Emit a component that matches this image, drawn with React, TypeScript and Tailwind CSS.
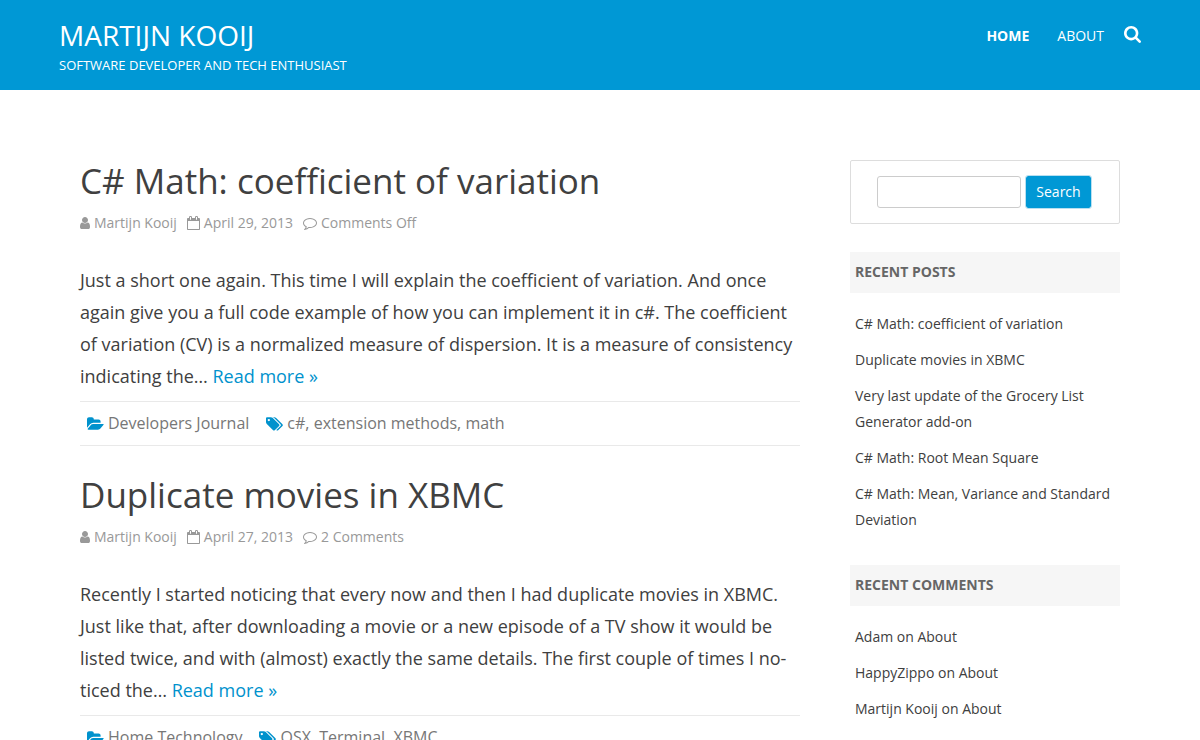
import type { ReactNode } from "react";

type IconProps = { className?: string };

const SearchIcon = ({ className }: IconProps) => (
  <svg viewBox="64 128 1664 1664" fill="currentColor" aria-hidden="true" className={className}>
    <path d="M1216 832q0-185-131.500-316.500t-316.500-131.500-316.500 131.500-131.500 316.500 131.500 316.500 316.500 131.500 316.500-131.500 131.500-316.500zm512 832q0 52-38 90t-90 38q-54 0-90-38l-343-342q-179 124-399 124-143 0-273.500-55.500t-225-150-150-225-55.500-273.500 55.500-273.500 150-225 225-150 273.500-55.500 273.500 55.500 225 150 150 225 55.500 273.500q0 220-124 399l343 343q37 37 37 90z" />
  </svg>
);

const UserIcon = ({ className }: IconProps) => (
  <svg viewBox="256 0 1280 1792" fill="currentColor" aria-hidden="true" className={className}>
    <path d="M1536 1399q0 109-62.500 187t-150.500 78h-854q-88 0-150.500-78t-62.500-187q0-85 8.500-160.500t31.500-152 58.500-131 94-89 134.500-34.500q131 128 313 128t313-128q76 0 134.500 34.500t94 89 58.500 131 31.500 152 8.500 160.500zm-256-887q0 159-112.500 271.500t-271.500 112.500-271.500-112.500-112.500-271.500 112.500-271.500 271.500-112.500 271.500 112.500 112.500 271.500z" />
  </svg>
);

const CalendarIcon = ({ className }: IconProps) => (
  <svg viewBox="64 0 1664 1792" fill="currentColor" aria-hidden="true" className={className}>
    <path d="M192 1664h1408v-1024h-1408v1024zm384-1216v-288q0-14-9-23t-23-9h-64q-14 0-23 9t-9 23v288q0 14 9 23t23 9h64q14 0 23-9t9-23zm768 0v-288q0-14-9-23t-23-9h-64q-14 0-23 9t-9 23v288q0 14 9 23t23 9h64q14 0 23-9t9-23zm384-64v1280q0 52-38 90t-90 38h-1408q-52 0-90-38t-38-90v-1280q0-52 38-90t90-38h128v-96q0-66 47-113t113-47h64q66 0 113 47t47 113v96h384v-96q0-66 47-113t113-47h64q66 0 113 47t47 113v96h128q52 0 90 38t38 90z" />
  </svg>
);

const CommentIcon = ({ className }: IconProps) => (
  <svg viewBox="0 0 1792 1792" fill="currentColor" aria-hidden="true" className={className}>
    <path d="M896 384q-204 0-381.500 69.500t-282 187.500-104.500 255q0 112 71.500 213.500t201.500 175.500l87 50-27 96q-24 91-70 172 152-63 275-171l43-38 57 6q69 8 130 8 204 0 381.500-69.500t282-187.500 104.500-255-104.500-255-282-187.500-381.500-69.500zm896 512q0 174-120 321.500t-326 233-450 85.500q-70 0-145-8-198 175-460 242-49 14-114 22h-5q-15 0-27-10.500t-16-27.500v-1q-3-4-.5-12t2-10 4.500-9.500l6-9 7-8.500 8-9q7-8 31-34.500t34.500-38 31-39.500 32.500-51 27-59 26-76q-157-89-247.500-220t-90.500-281q0-174 120-321.500t326-233 450-85.500 450 85.500 326 233 120 321.500z" />
  </svg>
);

const FolderIcon = ({ className }: IconProps) => (
  <svg viewBox="0 0 1920 1792" fill="currentColor" aria-hidden="true" className={className}>
    <path d="M1879 952q0 31-31 66l-336 396q-43 51-120.500 86.500t-143.500 35.500h-1088q-34 0-60.500-13t-26.500-43q0-31 31-66l336-396q43-51 120.500-86.500t143.500-35.500h1088q34 0 60.500 13t26.500 43zm-343-344v160h-832q-94 0-197 47.500t-164 119.500l-337 396-5 6q0-4-.5-12.500t-.5-12.500v-960q0-92 66-158t158-66h320q92 0 158 66t66 158v32h544q92 0 158 66t66 158z" />
  </svg>
);

const TagsIcon = ({ className }: IconProps) => (
  <svg viewBox="128 0 1920 1792" fill="currentColor" aria-hidden="true" className={className}>
    <path d="M576 448q0-53-37.500-90.500t-90.500-37.500-90.500 37.500-37.500 90.500 37.500 90.500 90.500 37.500 90.500-37.500 37.500-90.500zm1067 576q0 53-37 90l-491 492q-39 37-91 37-53 0-90-37l-715-716q-38-37-64.500-101t-26.500-117v-416q0-52 38-90t90-38h416q53 0 117 26.500t102 64.500l715 714q37 39 37 91zm384 0q0 53-37 90l-491 492q-39 37-91 37-36 0-59-14t-53-45l470-470q37-37 37-90 0-52-37-91l-715-714q-38-38-102-64.500t-117-26.500h224q53 0 117 26.500t102 64.500l715 714q37 39 37 91z" />
  </svg>
);

const posts = [
  {
    title: "C# Math: coefficient of variation",
    author: "Martijn Kooij",
    date: "April 29, 2013",
    comments: "Comments Off",
    excerpt:
      "Just a short one again. This time I will explain the coefficient of variation. And once again give you a full code example of how you can implement it in c#. The coefficient of variation (CV) is a normalized measure of dispersion. It is a measure of consistency indicating the…",
    category: "Developers Journal",
    tags: ["c#", "extension methods", "math"],
  },
  {
    title: "Duplicate movies in XBMC",
    author: "Martijn Kooij",
    date: "April 27, 2013",
    comments: "2 Comments",
    excerpt:
      "Recently I started noticing that every now and then I had duplicate movies in XBMC. Just like that, after downloading a movie or a new episode of a TV show it would be listed twice, and with (almost) exactly the same details. The first couple of times I no\u00adticed the…",
    category: "Home Technology",
    tags: ["OSX", "Terminal", "XBMC"],
  },
];

const recentPosts = [
  "C# Math: coefficient of variation",
  "Duplicate movies in XBMC",
  "Very last update of the Grocery List Generator add-on",
  "C# Math: Root Mean Square",
  "C# Math: Mean, Variance and Standard Deviation",
];

const recentComments = ["Adam", "HappyZippo", "Martijn Kooij"];

function Post({ post }: { post: (typeof posts)[number] }) {
  return (
    <article>
      <h2 className="text-[35px] leading-[42px] text-[#404040]">
        <a href="#">{post.title}</a>
      </h2>
      <div className="mt-[11px] flex flex-wrap gap-x-2.5 text-sm leading-5 text-[#999]">
        <a href="#" className="flex items-center gap-1">
          <UserIcon className="h-3.5 w-2.5" />
          {post.author}
        </a>
        <a href="#" className="flex items-center gap-1">
          <CalendarIcon className="h-3.5 w-[13px]" />
          {post.date}
        </a>
        <a href="#" className="flex items-center gap-1">
          <CommentIcon className="size-3.5" />
          {post.comments}
        </a>
      </div>
      <p className="mt-[31px] text-lg leading-8">
        {post.excerpt}{" "}
        <a href="#" className="text-[#0092cd]">
          Read more »
        </a>
      </p>
      <footer className="mt-[9px] flex flex-wrap gap-x-[17px] border-y border-[#e9e9e9] px-[7px] py-2 text-base leading-[27px] text-[#777]">
        <span className="flex items-center gap-1">
          <FolderIcon className="h-4 w-[17px] text-[#0092cd]" />
          <a href="#">{post.category}</a>
        </span>
        <span className="flex items-center gap-1">
          <TagsIcon className="h-4 w-[17px] text-[#0092cd]" />
          <span>
            {post.tags.map((tag, i) => (
              <span key={tag}>
                {i > 0 && ", "}
                <a href="#">{tag}</a>
              </span>
            ))}
          </span>
        </span>
      </footer>
    </article>
  );
}

function Widget({ title, children }: { title: string; children: ReactNode }) {
  return (
    <section>
      <h3 className="bg-[#f6f6f6] px-[5px] pt-2.5 pb-[11px] text-sm leading-5 font-bold text-[#666] uppercase">
        {title}
      </h3>
      <ul className="mt-[18px] flex flex-col gap-2.5 px-[5px] text-sm leading-[26px]">
        {children}
      </ul>
    </section>
  );
}

export default function App() {
  return (
    <div className="min-h-screen bg-white font-['Open_Sans',sans-serif] text-[#404040]">
      <header className="bg-[#0098d5] text-white">
        <div className="mx-auto flex max-w-[1082px] items-start justify-between pt-[17px] pb-3.5">
          <div>
            <h1 className="text-[28px] leading-9 uppercase">
              <a href="#">Martijn Kooij</a>
            </h1>
            <p className="mt-px text-[13px] leading-[22px] uppercase">
              Software developer and tech enthusiast
            </p>
          </div>
          <nav className="flex h-[38px] items-center text-sm uppercase">
            <a href="#" className="font-bold">
              Home
            </a>
            <a href="#" className="ml-7">
              About
            </a>
            <button type="button" aria-label="Open search" className="ml-5 pb-1">
              <SearchIcon className="size-[17px]" />
            </button>
          </nav>
        </div>
      </header>

      <div className="mx-auto flex max-w-[1040px] items-start gap-[50px] pt-[70px]">
        <main className="flex min-w-0 flex-1 flex-col gap-7">
          {posts.map((post) => (
            <Post key={post.title} post={post} />
          ))}
        </main>

        <aside className="flex w-[270px] shrink-0 flex-col">
          <form
            role="search"
            className="mb-7 flex items-center justify-center gap-[5px] rounded-xs border border-[#ddd] py-[15px] pr-0.5"
            onSubmit={(e) => e.preventDefault()}
          >
            <input
              type="text"
              aria-label="Search"
              className="h-8 w-36 rounded-[3px] border border-[#ccc] px-2 text-sm"
            />
            <button
              type="submit"
              className="h-8 rounded-xs bg-[#0098d5] px-2.5 text-sm text-white outline outline-[#b8dff0]"
            >
              Search
            </button>
          </form>

          <div className="flex flex-col gap-8">
            <Widget title="Recent Posts">
              {recentPosts.map((title) => (
                <li key={title}>
                  <a href="#">{title}</a>
                </li>
              ))}
            </Widget>
            <Widget title="Recent Comments">
              {recentComments.map((name) => (
                <li key={name}>
                  <a href="#">{name}</a> on <a href="#">About</a>
                </li>
              ))}
            </Widget>
          </div>
        </aside>
      </div>
    </div>
  );
}
